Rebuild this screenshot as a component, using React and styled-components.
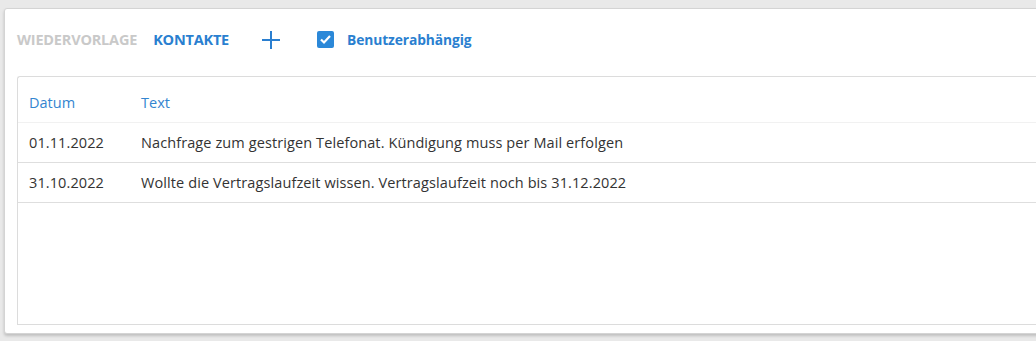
import React from 'react';
import styled, { createGlobalStyle } from 'styled-components';

const GlobalStyle = createGlobalStyle`
	html, body {
		margin: 0;
		padding: 0;
		background: #e9e9e9;
		font-family: 'Open Sans', 'Liberation Sans', sans-serif;
	}
	#root {
		height: 341px;
		overflow: hidden;
	}
`;

const Page = styled.div`
	padding: 8px 0 0 4px;
	height: 341px;
	box-sizing: border-box;
	overflow: hidden;
`;

const Card = styled.div`
	width: 1060px;
	height: 326px;
	box-sizing: border-box;
	background: #fff;
	border: 1px solid #d4d4d4;
	border-radius: 3px;
	box-shadow: 0 2px 3px rgba(0, 0, 0, 0.18);
	padding: 0 0 8px 12px;
	display: flex;
	flex-direction: column;
`;

const Toolbar = styled.div`
	display: flex;
	align-items: center;
	height: 61px;
`;

const Tab = styled.div`
	font-size: 14.5px;
	font-weight: 700;
	text-transform: uppercase;
	letter-spacing: -0.2px;
	color: ${({ active }) => (active ? '#2a7fd0' : '#c9c9c9')};
	margin-right: ${({ gap }) => gap}px;
	margin-top: -1px;
`;

const AddButton = styled.button`
	border: none;
	background: none;
	padding: 0;
	width: 18px;
	height: 18px;
	margin-right: 37px;
	cursor: pointer;
	display: flex;
`;

const CheckLabel = styled.label`
	display: flex;
	align-items: center;
	gap: 13px;
	font-size: 13.8px;
	font-weight: 700;
	color: #2a7fd0;
	letter-spacing: -0.1px;
`;

const CheckBox = styled.span`
	width: 17px;
	height: 17px;
	border-radius: 2px;
	background: #2b88d8;
	display: flex;
	align-items: center;
	justify-content: center;
`;

const TableBox = styled.div`
	flex: 1;
	border: 1px solid #dcdcdc;
	border-right: none;
	border-radius: 3px 0 0 0;
	margin-top: 6px;
`;

const Table = styled.table`
	width: 100%;
	border-collapse: collapse;
	font-size: 14.5px;
`;

const HeadCell = styled.th`
	text-align: left;
	font-weight: 400;
	color: #3385d0;
	height: 45px;
	padding: 6px 0 0 ${({ first }) => (first ? 11 : 0)}px;
	width: ${({ w }) => (w ? `${w}px` : 'auto')};
	border-bottom: 1px solid #f1f1f1;
	box-sizing: border-box;
`;

const Cell = styled.td`
	color: #333;
	height: 40px;
	box-sizing: border-box;
	padding: 0 0 0 ${({ first }) => (first ? 11 : 0)}px;
	border-bottom: 1px solid #dedede;
	white-space: nowrap;
	letter-spacing: 0.1px;
`;

const rows = [
	{ datum: '01.11.2022', text: 'Nachfrage zum gestrigen Telefonat. Kündigung muss per Mail erfolgen' },
	{ datum: '31.10.2022', text: 'Wollte die Vertragslaufzeit wissen. Vertragslaufzeit noch bis 31.12.2022' },
];

export default function App() {
	return (
		<Page>
			<GlobalStyle />
			<Card>
				<Toolbar>
					<Tab gap={16}>Wiedervorlage</Tab>
					<Tab active gap={33}>Kontakte</Tab>
					<AddButton aria-label="Hinzufügen">
						<svg width="18" height="18" viewBox="0 0 18 18">
							<path d="M9 0v18M0 9h18" stroke="#2a7fd0" strokeWidth="2" />
						</svg>
					</AddButton>
					<CheckLabel>
						<CheckBox>
							<svg width="13" height="13" viewBox="0 0 13 13">
								<path d="M2 6.5l3 3 6-6.5" stroke="#fff" strokeWidth="2.2" fill="none" />
							</svg>
						</CheckBox>
						Benutzerabhängig
					</CheckLabel>
				</Toolbar>
				<TableBox>
					<Table>
						<thead>
							<tr>
								<HeadCell first w={123}>Datum</HeadCell>
								<HeadCell>Text</HeadCell>
							</tr>
						</thead>
						<tbody>
							{rows.map(r => (
								<tr key={r.datum}>
									<Cell first>{r.datum}</Cell>
									<Cell>{r.text}</Cell>
								</tr>
							))}
						</tbody>
					</Table>
				</TableBox>
			</Card>
		</Page>
	);
}
